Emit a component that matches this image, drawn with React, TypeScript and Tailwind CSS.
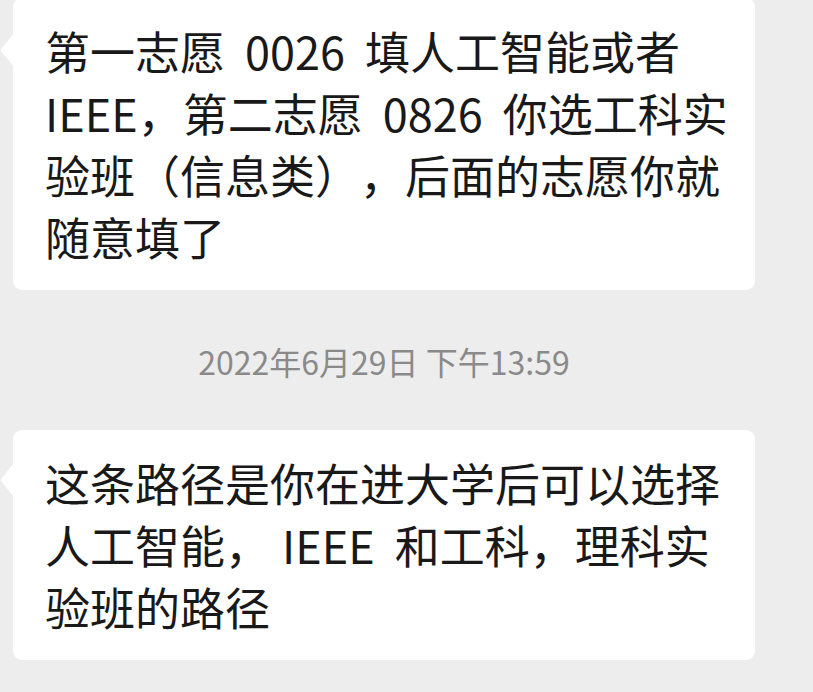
import type { ReactNode } from "react";

const Tail = ({ top }: { top: string }) => (
  <svg
    className={`absolute -left-[13px] ${top}`}
    width="14"
    height="34"
    viewBox="0 0 14 34"
  >
    <path d="M14 0 L1.5 15.5 Q0 17 1.5 18.5 L14 34 Z" fill="#ffffff" />
  </svg>
);

const Bubble = ({ lines, tailTop }: { lines: ReactNode[]; tailTop: string }) => (
  <div className="relative ml-[13px] w-[742px] rounded-[9px] bg-white pl-[32px] pr-[20px] py-[22px]">
    <Tail top={tailTop} />
    {lines.map((line, i) => (
      <div
        key={i}
        className="h-[62px] whitespace-nowrap text-[45px] leading-[62px] text-[#191919] [word-spacing:10px] [text-spacing-trim:space-all]"
      >
        {line}
      </div>
    ))}
  </div>
);

export default function App() {
  return (
    <div
      className="h-[692px] w-[813px] overflow-hidden bg-[#ededed]"
      style={{ fontFamily: '"Noto Sans CJK SC", "Noto Sans", sans-serif' }}
    >
      <div className="-mt-[2px]">
        <Bubble
          tailTop="top-[35px]"
          lines={[
            "第一志愿 0026 填人工智能或者",
            "IEEE，第二志愿 0826 你选工科实",
            "验班（信息类），后面的志愿你就",
            "随意填了",
          ]}
        />
      </div>
      <div className="ml-[13px] flex h-[140px] w-[742px] items-center justify-center pt-[2px]">
        <span className="text-[32px] leading-none text-[#8a8a8a]">2022年6月29日 下午13:59</span>
      </div>
      <Bubble
        tailTop="top-[33px]"
        lines={[
          "这条路径是你在进大学后可以选择",
          <>
            人工智能，<span className="ml-[12px]">IEEE</span> 和工科，理科实
          </>,
          "验班的路径",
        ]}
      />
    </div>
  );
}
